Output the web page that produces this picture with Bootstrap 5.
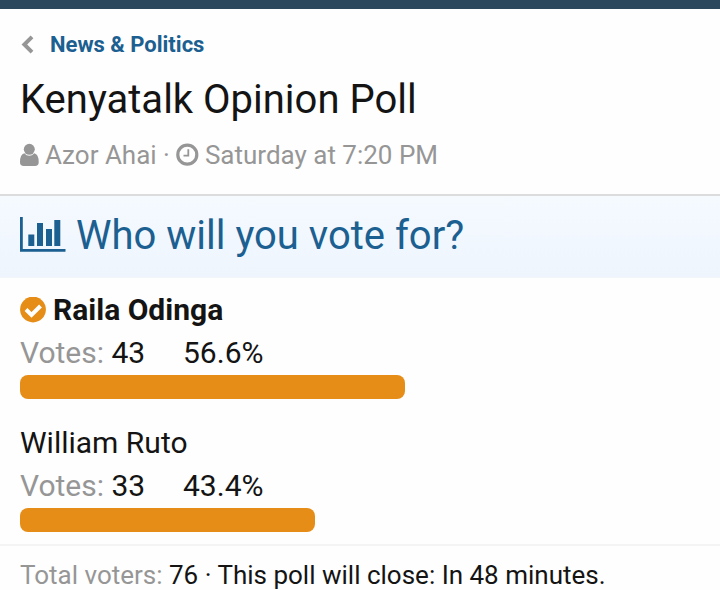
<!DOCTYPE html>
<html lang="en">
<head>
<meta charset="utf-8">
<meta name="viewport" content="width=device-width, initial-scale=1">
<title>Kenyatalk Opinion Poll</title>
<link href="https://cdn.jsdelivr.net/npm/bootstrap@5.3.0/dist/css/bootstrap.min.css" rel="stylesheet">
<style>
body{font-family:Roboto,"Liberation Sans",sans-serif;color:#141414;background:#fefefe;height:590px;overflow:hidden;white-space:nowrap}
svg{display:block;flex:none}
.topbar{height:9px;background:#2b485c}
.thread-head{height:187px;padding:21px 20px 0;background:#fefefe;border-bottom:2px solid #dcdcdc}
.crumb{height:30px;font-size:22px;line-height:30px;font-weight:700;color:#1b6090}
.crumb svg{margin:0 15px 0 1px}
.thread-title{font-size:40px;line-height:48px;margin:16px 0 0;font-weight:400}
.meta{font-size:26px;line-height:30px;margin-top:16px;color:#969696}
.author{margin:0 6px}
.posted{margin-left:6px}
.question{height:82px;padding:16px 20px 0;color:#1b6090;background:linear-gradient(#f5faff,#eef5fd);border-bottom:1px solid #f3f6f9}
.question svg{margin-top:5px}
.question h2{font-size:40px;line-height:48px;font-weight:400;margin:0 0 0 10px}
.choices{padding-top:11px}
.choice{padding:0 20px;font-size:30px;line-height:42px}
.choice+.choice{margin-top:23px}
.label-muted{color:#969696}
.picked{margin-left:7px}
.tally{padding-top:1px}
.votes{width:163px}
.bar{height:24px;margin-top:1px;border-radius:8px;background:#e68d17}
.poll-foot{margin-top:12px;border-top:2px solid #f4f4f4;padding:14px 20px 0;font-size:26px;line-height:30px}
</style>
<script src="https://cdn.jsdelivr.net/npm/bootstrap@5.3.0/dist/js/bootstrap.bundle.min.js"></script>
</head>
<body>
<div class="topbar"></div>
<header class="thread-head">
  <a class="crumb d-flex align-items-center text-decoration-none" href="#">
    <svg width="14" height="20" viewBox="0 0 14 20"><path d="M11 1.800 3.300 9.500l7.700 7.700" fill="none" stroke="#969696" stroke-width="3.900"/></svg>
    <span>News &amp; Politics</span>
  </a>
  <h1 class="thread-title">Kenyatalk Opinion Poll</h1>
  <div class="meta d-flex align-items-center">
    <svg width="19" height="24" viewBox="0 0 19 24"><g fill="#969696"><circle cx="9.300" cy="6.300" r="5.500"/><path d="M4.300 10.300Q0 11.200 0 19.200Q0 23 3.700 23H15Q18.700 23 18.700 19.200Q18.700 11.200 14.300 10.300Q12 12.800 9.300 12.800T4.300 10.300Z"/></g></svg>
    <span class="author">Azor Ahai ·</span>
    <svg width="23" height="24" viewBox="0 0 23 24"><circle cx="11.300" cy="11.700" r="9.500" fill="none" stroke="#969696" stroke-width="3.200"/><path d="M12.300 6.300V12.700H7.500" fill="none" stroke="#969696" stroke-width="1.800"/></svg>
    <span class="posted">Saturday at 7:20 PM</span>
  </div>
</header>
<main>
  <div class="question d-flex align-items-start">
    <svg width="46" height="35" viewBox="0 0 46 35" fill="#1b6090"><path d="M0 0H2.800V32H45.500V34.800H0ZM8.300 17.500H14.300V29H8.300ZM17 6H23V29H17ZM26 12H32V29H26ZM34.300 3H40.300V29H34.300Z"/></svg>
    <h2>Who will you vote for?</h2>
  </div>
  <div class="choices">
    <section class="choice">
      <div class="d-flex align-items-center fw-bold">
        <svg width="26" height="26" viewBox="0 0 26 26"><circle cx="13" cy="12.500" r="12.900" fill="#e68d17"/><path d="M6 12.500 11.500 18 20.500 9" fill="none" stroke="#fff" stroke-width="4"/></svg>
        <span class="picked">Raila Odinga</span>
      </div>
      <div class="tally d-flex"><div class="votes"><span class="label-muted">Votes:</span> 43</div><span>56.6%</span></div>
      <div class="bar" style="width:56.6%"></div>
    </section>
    <section class="choice">
      <div>William Ruto</div>
      <div class="tally d-flex"><div class="votes"><span class="label-muted">Votes:</span> 33</div><span>43.4%</span></div>
      <div class="bar" style="width:43.4%"></div>
    </section>
  </div>
  <footer class="poll-foot"><span class="label-muted">Total voters:</span> 76 · This poll will close: In 48 minutes.</footer>
</main>
</body>
</html>
